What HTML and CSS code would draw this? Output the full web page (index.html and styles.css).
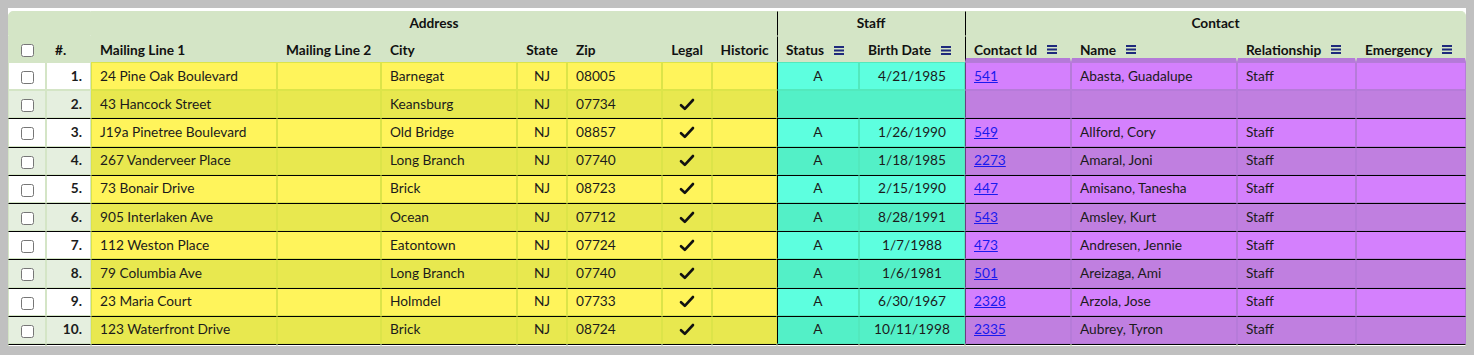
FILE: index.html
```html
<!DOCTYPE html>
<html>
<head>
<meta charset="utf-8">
<link rel="stylesheet" href="styles.css">
</head>
<body>
<div class="frame">
<table class="grid">
<colgroup>
<col class="w-cb"><col class="w-num"><col class="w-ml1"><col class="w-ml2"><col class="w-city"><col class="w-state"><col class="w-zip"><col class="w-legal"><col class="w-hist"><col class="w-status"><col class="w-birth"><col class="w-cid"><col class="w-name"><col class="w-rel"><col class="w-emer">
</colgroup>
<thead>
<tr class="groups">
<th colspan="2" class="tl"></th>
<th colspan="7">Address</th>
<th colspan="2" class="gs">Staff</th>
<th colspan="4" class="gs tr">Contact</th>
</tr>
<tr class="cols">
<th class="cb"><input type="checkbox"></th>
<th>#.</th>
<th>Mailing Line 1</th>
<th>Mailing Line 2</th>
<th>City</th>
<th class="ctr">State</th>
<th>Zip</th>
<th class="ctr">Legal</th>
<th class="ctr">Historic</th>
<th class="gs">Status<span class="menu"><svg width="10" height="9" viewBox="0 0 10 9"><rect y="0" width="10" height="2"/><rect y="3.5" width="10" height="2"/><rect y="7" width="10" height="2"/></svg></span></th>
<th>Birth Date<span class="menu"><svg width="10" height="9" viewBox="0 0 10 9"><rect y="0" width="10" height="2"/><rect y="3.5" width="10" height="2"/><rect y="7" width="10" height="2"/></svg></span></th>
<th class="gs kh">Contact Id<span class="menu"><svg width="10" height="9" viewBox="0 0 10 9"><rect y="0" width="10" height="2"/><rect y="3.5" width="10" height="2"/><rect y="7" width="10" height="2"/></svg></span></th>
<th class="kh">Name<span class="menu"><svg width="10" height="9" viewBox="0 0 10 9"><rect y="0" width="10" height="2"/><rect y="3.5" width="10" height="2"/><rect y="7" width="10" height="2"/></svg></span></th>
<th class="kh">Relationship<span class="menu"><svg width="10" height="9" viewBox="0 0 10 9"><rect y="0" width="10" height="2"/><rect y="3.5" width="10" height="2"/><rect y="7" width="10" height="2"/></svg></span></th>
<th class="kh">Emergency<span class="menu"><svg width="10" height="9" viewBox="0 0 10 9"><rect y="0" width="10" height="2"/><rect y="3.5" width="10" height="2"/><rect y="7" width="10" height="2"/></svg></span></th>
</tr>
</thead>
<tbody>
<tr class="odd">
<td class="c"><input type="checkbox"></td><td class="n">1.</td>
<td class="a">24 Pine Oak Boulevard</td><td class="a"></td><td class="a">Barnegat</td><td class="a ctr">NJ</td><td class="a">08005</td><td class="a ctr"></td><td class="a"></td>
<td class="s first ctr">A</td><td class="s ctr">4/21/1985</td>
<td class="k first"><a href="#">541</a></td><td class="k">Abasta, Guadalupe</td><td class="k">Staff</td><td class="k"></td>
</tr>
<tr class="even">
<td class="c"><input type="checkbox"></td><td class="n">2.</td>
<td class="a">43 Hancock Street</td><td class="a"></td><td class="a">Keansburg</td><td class="a ctr">NJ</td><td class="a">07734</td><td class="a ctr"><svg class="chk" width="16" height="13" viewBox="0 0 16 13"><path d="M2 7.2 L5.8 10.8 L14 2" fill="none" stroke="#111" stroke-width="2.6" stroke-linecap="round" stroke-linejoin="round"/></svg></td><td class="a"></td>
<td class="s first" colspan="2"></td>
<td class="k first"></td><td class="k"></td><td class="k"></td><td class="k"></td>
</tr>
<tr class="odd line">
<td class="c"><input type="checkbox"></td><td class="n">3.</td>
<td class="a">J19a Pinetree Boulevard</td><td class="a"></td><td class="a">Old Bridge</td><td class="a ctr">NJ</td><td class="a">08857</td><td class="a ctr"><svg class="chk" width="16" height="13" viewBox="0 0 16 13"><path d="M2 7.2 L5.8 10.8 L14 2" fill="none" stroke="#111" stroke-width="2.6" stroke-linecap="round" stroke-linejoin="round"/></svg></td><td class="a"></td>
<td class="s first ctr">A</td><td class="s ctr">1/26/1990</td>
<td class="k first"><a href="#">549</a></td><td class="k">Allford, Cory</td><td class="k">Staff</td><td class="k"></td>
</tr>
<tr class="even line">
<td class="c"><input type="checkbox"></td><td class="n">4.</td>
<td class="a">267 Vanderveer Place</td><td class="a"></td><td class="a">Long Branch</td><td class="a ctr">NJ</td><td class="a">07740</td><td class="a ctr"><svg class="chk" width="16" height="13" viewBox="0 0 16 13"><path d="M2 7.2 L5.8 10.8 L14 2" fill="none" stroke="#111" stroke-width="2.6" stroke-linecap="round" stroke-linejoin="round"/></svg></td><td class="a"></td>
<td class="s first ctr">A</td><td class="s ctr">1/18/1985</td>
<td class="k first"><a href="#">2273</a></td><td class="k">Amaral, Joni</td><td class="k">Staff</td><td class="k"></td>
</tr>
<tr class="odd line">
<td class="c"><input type="checkbox"></td><td class="n">5.</td>
<td class="a">73 Bonair Drive</td><td class="a"></td><td class="a">Brick</td><td class="a ctr">NJ</td><td class="a">08723</td><td class="a ctr"><svg class="chk" width="16" height="13" viewBox="0 0 16 13"><path d="M2 7.2 L5.8 10.8 L14 2" fill="none" stroke="#111" stroke-width="2.6" stroke-linecap="round" stroke-linejoin="round"/></svg></td><td class="a"></td>
<td class="s first ctr">A</td><td class="s ctr">2/15/1990</td>
<td class="k first"><a href="#">447</a></td><td class="k">Amisano, Tanesha</td><td class="k">Staff</td><td class="k"></td>
</tr>
<tr class="even line">
<td class="c"><input type="checkbox"></td><td class="n">6.</td>
<td class="a">905 Interlaken Ave</td><td class="a"></td><td class="a">Ocean</td><td class="a ctr">NJ</td><td class="a">07712</td><td class="a ctr"><svg class="chk" width="16" height="13" viewBox="0 0 16 13"><path d="M2 7.2 L5.8 10.8 L14 2" fill="none" stroke="#111" stroke-width="2.6" stroke-linecap="round" stroke-linejoin="round"/></svg></td><td class="a"></td>
<td class="s first ctr">A</td><td class="s ctr">8/28/1991</td>
<td class="k first"><a href="#">543</a></td><td class="k">Amsley, Kurt</td><td class="k">Staff</td><td class="k"></td>
</tr>
<tr class="odd line">
<td class="c"><input type="checkbox"></td><td class="n">7.</td>
<td class="a">112 Weston Place</td><td class="a"></td><td class="a">Eatontown</td><td class="a ctr">NJ</td><td class="a">07724</td><td class="a ctr"><svg class="chk" width="16" height="13" viewBox="0 0 16 13"><path d="M2 7.2 L5.8 10.8 L14 2" fill="none" stroke="#111" stroke-width="2.6" stroke-linecap="round" stroke-linejoin="round"/></svg></td><td class="a"></td>
<td class="s first ctr">A</td><td class="s ctr">1/7/1988</td>
<td class="k first"><a href="#">473</a></td><td class="k">Andresen, Jennie</td><td class="k">Staff</td><td class="k"></td>
</tr>
<tr class="even line">
<td class="c"><input type="checkbox"></td><td class="n">8.</td>
<td class="a">79 Columbia Ave</td><td class="a"></td><td class="a">Long Branch</td><td class="a ctr">NJ</td><td class="a">07740</td><td class="a ctr"><svg class="chk" width="16" height="13" viewBox="0 0 16 13"><path d="M2 7.2 L5.8 10.8 L14 2" fill="none" stroke="#111" stroke-width="2.6" stroke-linecap="round" stroke-linejoin="round"/></svg></td><td class="a"></td>
<td class="s first ctr">A</td><td class="s ctr">1/6/1981</td>
<td class="k first"><a href="#">501</a></td><td class="k">Areizaga, Ami</td><td class="k">Staff</td><td class="k"></td>
</tr>
<tr class="odd line">
<td class="c"><input type="checkbox"></td><td class="n">9.</td>
<td class="a">23 Maria Court</td><td class="a"></td><td class="a">Holmdel</td><td class="a ctr">NJ</td><td class="a">07733</td><td class="a ctr"><svg class="chk" width="16" height="13" viewBox="0 0 16 13"><path d="M2 7.2 L5.8 10.8 L14 2" fill="none" stroke="#111" stroke-width="2.6" stroke-linecap="round" stroke-linejoin="round"/></svg></td><td class="a"></td>
<td class="s first ctr">A</td><td class="s ctr">6/30/1967</td>
<td class="k first"><a href="#">2328</a></td><td class="k">Arzola, Jose</td><td class="k">Staff</td><td class="k"></td>
</tr>
<tr class="even line">
<td class="c"><input type="checkbox"></td><td class="n">10.</td>
<td class="a">123 Waterfront Drive</td><td class="a"></td><td class="a">Brick</td><td class="a ctr">NJ</td><td class="a">08724</td><td class="a ctr"><svg class="chk" width="16" height="13" viewBox="0 0 16 13"><path d="M2 7.2 L5.8 10.8 L14 2" fill="none" stroke="#111" stroke-width="2.6" stroke-linecap="round" stroke-linejoin="round"/></svg></td><td class="a"></td>
<td class="s first ctr">A</td><td class="s ctr">10/11/1998</td>
<td class="k first"><a href="#">2335</a></td><td class="k">Aubrey, Tyron</td><td class="k">Staff</td><td class="k"></td>
</tr>
<tr class="blank line">
<td></td><td></td><td></td><td></td><td></td><td></td><td></td><td></td><td></td><td></td><td></td><td></td><td></td><td></td><td></td>
</tr>
</tbody>
</table>
</div>
</body>
</html>
```

FILE: styles.css
```css
html, body {
  margin: 0;
}
body {
  margin: 8px;
  background: #c0c0c0;
  font-family: Lato, "Noto Sans", sans-serif;
  font-size: 13.7px;
  color: #1b1b1b;
}
.frame {
  width: 1458px;
  height: 338px;
  overflow: hidden;
  background: #fff;
  padding-top: 3px;
  box-sizing: border-box;
}
.grid {
  border-collapse: separate;
  border-spacing: 0;
  table-layout: fixed;
  width: 1458px;
}
.w-cb { width: 38px; }
.w-num { width: 45px; }
.w-ml1 { width: 186px; }
.w-ml2 { width: 104px; }
.w-city { width: 136px; }
.w-state { width: 50px; }
.w-zip { width: 95px; }
.w-legal { width: 50px; }
.w-hist { width: 65px; }
.w-status { width: 82px; }
.w-birth { width: 106px; }
.w-cid { width: 106px; }
.w-name { width: 166px; }
.w-rel { width: 119px; }
.w-emer { width: 110px; }

th, td {
  padding: 0 8px;
  border: 1px solid transparent;
  white-space: nowrap;
  overflow: hidden;
  text-align: left;
  vertical-align: middle;
  line-height: 16px;
}
thead th {
  background: #d4e5c6;
  border-color: #d4e5c6;
  font-weight: 700;
  color: #111;
}
.groups { height: 25px; }
.groups th { text-align: center; padding-bottom: 1px; }
.cols { height: 26px; }
.cols th { padding-top: 2px; }
.cols th.kh { padding-top: 4px; }
.cols th.cb { padding-top: 0; }
tbody tr { height: 28.2px; }
tbody td { padding-bottom: 1px; }

th.tl { border-top-left-radius: 5px; }
th.tr { border-top-right-radius: 5px; }
th.gs { border-left-color: #000; }
th.kh { border-bottom: 4px solid #b47ad8; }
th.ctr, td.ctr { text-align: center; padding-left: 4px; padding-right: 4px; }

.cb, td.c { padding: 0; text-align: center; }
input[type="checkbox"] {
  margin: 0;
  width: 13px;
  height: 13px;
  vertical-align: middle;
}

.menu {
  display: inline-block;
  margin-left: 10px;
  vertical-align: middle;
  line-height: 0;
  position: relative;
  top: -1px;
}
.menu svg { fill: #1f2a7c; }

td.c, td.n {
  background: #fff;
  border-color: #d4e5c6;
}
td.n {
  font-weight: 700;
  text-align: right;
}
td.a {
  background: #fff45b;
  border-color: #dce449;
}
td.s {
  background: #5dffdf;
  border-color: #52e9bd;
}
td.s.first { border-left-color: #000; }
td.k {
  background: #d480fd;
  border-color: #b67bd9;
}
td.k.first { border-left-color: #6b3d82; }

tr.even td.c, tr.even td.n { background: #e5efdf; }
tr.even td.a { background: #e8e84f; }
tr.even td.s { background: #53f0c7; }
tr.even td.k { background: #c07fe0; }

tr.line td { border-top-color: #000; }

tr.blank td {
  background: #fff;
  border-color: #d4e5c6;
  border-top-color: #000;
}

td a {
  color: #1a1aee;
  text-decoration: underline;
}
.chk {
  display: inline-block;
  vertical-align: middle;
  position: relative;
  top: -1px;
}
```
